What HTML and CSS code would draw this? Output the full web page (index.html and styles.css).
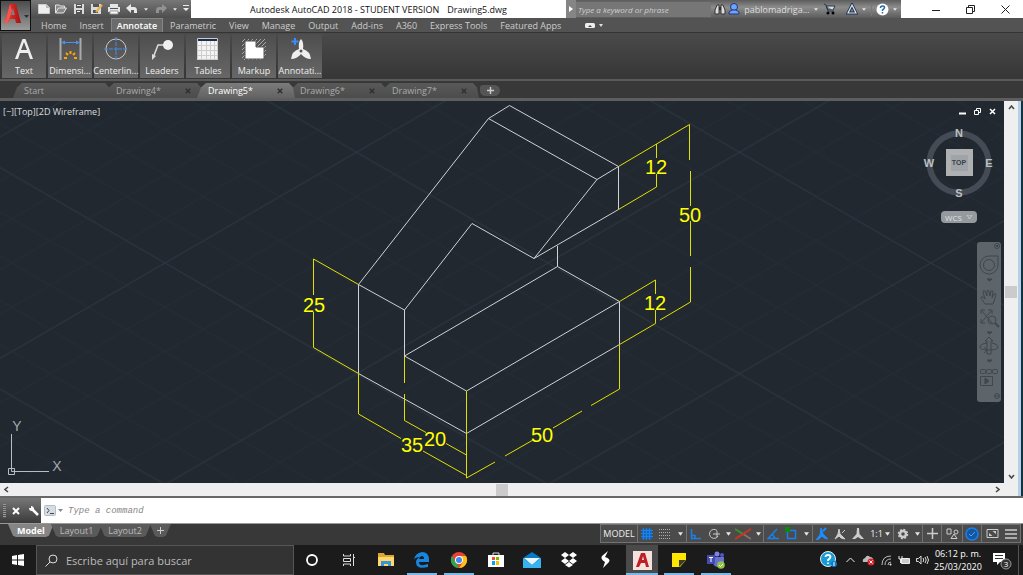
FILE: index.html
```html
<!DOCTYPE html>
<html lang="en">
<head>
<meta charset="utf-8">
<title>Autodesk AutoCAD 2018 - Drawing5.dwg</title>
<link rel="stylesheet" href="styles.css">
</head>
<body>
<svg class="defs" width="0" height="0" aria-hidden="true">
  <defs>
    <symbol id="caret" viewBox="0 0 6 4"><path d="M0 0h6L3 4z"/></symbol>
    <symbol id="close" viewBox="0 0 8 8"><path d="M1 1l6 6M7 1L1 7" fill="none" stroke="currentColor" stroke-width="2"/></symbol>
    <linearGradient id="red" x1="0" x2="1"><stop offset="0" stop-color="#f04038"/><stop offset="1" stop-color="#a90f12"/></linearGradient>
  </defs>
</svg>
<div class="app">
  <header class="top">
    <button class="app-menu" aria-label="Application menu">
      <svg width="28" height="28" viewBox="0 0 28 28"><path d="M2 21L8 2h6l5 19h-5l-1-4H8l-2 4z" fill="url(#red)"/><path d="M8 2L4 17l-2 4 4 0 4-12z" fill="#f4564e"/><path d="M9 13l2-7 2 7z" fill="#7e7e7e"/><path d="M22 13h5l-2.500 3z" fill="#26303c"/></svg>
    </button>
    <div class="top-main">
      <div class="titlebar">
        <div class="quick">
          <button aria-label="New"><svg width="14" height="12"><path d="M1.500 1.500h8l3 3v6h-11z" fill="#eee" stroke="#ccc"/><path d="M9 1v4h4" fill="#bbb"/></svg></button>
          <button aria-label="Open"><svg width="14" height="12"><path d="M1.500 10V2h4l1 1h4v2M1.500 10l3-5h8l-3 5z" fill="#888" stroke="#e4e4e4"/></svg></button>
          <button aria-label="Save"><svg width="14" height="12"><path d="M2 1h10v10H2z" fill="#dadada"/><path d="M4 1h6v4H4zM4 7h6v4H4z" fill="#555"/><path d="M5 2h4v1H5zM5 8h3v1H5z" fill="#eee"/></svg></button>
          <button aria-label="Save as"><svg width="14" height="12"><path d="M1 1h10v10H1z" fill="#dadada"/><path d="M3 1h6v3H3zM3 7h5v3H3z" fill="#555"/><path d="M6 9l6-7" stroke="#eab24a" stroke-width="2"/></svg></button>
          <button aria-label="Plot"><svg width="14" height="12"><path d="M3 1h8v3H3zM1 4h12v5H1z" fill="#e5e5e5"/><path d="M3 5h8v1H3z" fill="#555"/><path d="M3 8h8v3H3z" fill="#fff" stroke="#999"/></svg></button>
          <button aria-label="Undo"><svg width="14" height="12"><path d="M1 5l5-4v3h3q3 0 3 4v2H9V7H6v3z" fill="#e8e8e8"/></svg></button>
          <button class="slim" aria-label="Undo list"><svg class="caret" width="4" height="3"><use href="#caret"/></svg></button>
          <button aria-label="Redo"><svg width="14" height="12"><path d="M13 5L8 1v3H5Q2 4 2 8v2h3V7h3v3z" fill="#929292"/></svg></button>
          <button class="slim" aria-label="Redo list"><svg class="caret" width="4" height="3"><use href="#caret"/></svg></button>
          <button class="slim" aria-label="Customize"><svg width="8" height="8"><path d="M1 0h6v1H1zM1 3h6L4 6z" fill="#eee"/></svg></button>
        </div>
        <h1 class="title"><span>Autodesk AutoCAD 2018 - STUDENT VERSION</span><span>Drawing5.dwg</span></h1>
        <div class="info">
          <button class="expand" aria-label="Collapse search"><svg width="4" height="6"><path d="M0 0l4 3-4 3z" fill="#fff"/></svg></button>
          <input class="search" type="text" placeholder="Type a keyword or phrase" aria-label="Search help">
          <button class="i18" aria-label="Find"><svg width="12" height="11"><path d="M1 10V6l2-5h2v9zM7 10V1h2l2 5v4z" fill="#ddd" stroke="#333"/><path d="M5 3h2v3H5z" fill="#333"/></svg></button>
          <button class="user"><svg width="12" height="12"><circle cx="6" cy="4" r="3.500" fill="#6ea4ff" stroke="#1e3670"/><path d="M1 11V9l3-2h4l3 2v2z" fill="#6ea4ff" stroke="#1e3670"/></svg><span>pablomadriga...</span><svg class="caret" width="4" height="3"><use href="#caret"/></svg></button>
          <button class="i24" aria-label="App store"><svg width="13" height="12"><path d="M1 1l2 1 2 6h6M3 3h9l-2 4H5z" fill="#ddd" stroke="#23364a"/><circle cx="5" cy="10" r="1.500"/><circle cx="10" cy="10" r="1.500"/></svg></button>
          <button class="i30" aria-label="Stay connected"><svg width="12" height="12"><path d="M6 2L2 10h8z" fill="none" stroke="#22344c" stroke-width="3"/><path d="M6 2L2 10h8z" fill="none" stroke="#dae7f5" stroke-width="1.200"/></svg><svg class="caret" width="4" height="3"><use href="#caret"/></svg></button>
          <button class="i30 ruled" aria-label="Help"><svg width="13" height="13"><circle cx="6.500" cy="6.500" r="6" fill="#fff"/><path d="M4.500 5q0-2 2-2t2 1.500Q8.500 5.500 6.500 7v1M6.500 9v1.500" fill="none" stroke="#2766b4" stroke-width="1.500"/></svg><svg class="caret" width="4" height="3"><use href="#caret"/></svg></button>
        </div>
        <div class="window">
          <button aria-label="Minimize"><svg width="9" height="9"><path d="M0 5.500h8" stroke="#222"/></svg></button>
          <button aria-label="Restore"><svg width="9" height="9"><path d="M.5 2.500h6v6h-6zM2.500 2V.5h6v6H7" fill="none" stroke="#222"/></svg></button>
          <button aria-label="Close"><svg width="9" height="9"><path d="M.5.5l8 8M8.500.5l-8 8" stroke="#222"/></svg></button>
        </div>
      </div>
      <nav class="menu">
        <button>Home</button><button>Insert</button><button class="on">Annotate</button><button>Parametric</button><button>View</button><button>Manage</button><button>Output</button><button>Add-ins</button><button>A360</button><button>Express Tools</button><button>Featured Apps</button>
        <button class="mini" aria-label="Minimize ribbon"><svg width="18" height="7"><rect y="1" width="10" height="5" rx="1.500" fill="#eee"/><path d="M3 5l2-2 2 2z" fill="#444"/><path d="M14 2h4l-2 3z" fill="#ddd"/></svg></button>
      </nav>
    </div>
  </header>

  <section class="ribbon" aria-label="Annotate">
    <button><svg width="28" height="26"><path d="M5 23L12.500 3h3L23 23h-3l-2-6H10l-2 6zM11 14h6l-3-8z" fill="#eee"/></svg><span>Text</span></button>
    <button><svg width="28" height="26"><path d="M4.500 2v22M24.500 2v22" stroke="#aaa" stroke-width="2"/><path d="M6 6.500h17" stroke="#4a90f0"/><path d="M5 6.500l4-2v4zM24 6.500l-4-2v4z" fill="#4a90f0"/><path d="M14.500 15v3M10 17l2 2M19 17l-2 2M8 22h3M18 22h3" stroke="#ffa500" stroke-width="2"/></svg><span>Dimensi...</span></button>
    <button><svg width="28" height="26"><circle cx="14" cy="13" r="10" fill="none" stroke="#c8c8c8"/><path d="M14 1v10M14 15v10M2 13h10M16 13h10" stroke="#438be8" stroke-dasharray="4 1"/><path d="M14 11v4M12 13h4" stroke="#438be8"/></svg><span>Centerlin...</span></button>
    <button><svg width="28" height="26"><path d="M5 22L10 9h8" fill="none" stroke="#ddd" stroke-width="1.500"/><path d="M4 24v-6l4 2z" fill="#ddd"/><circle cx="20" cy="9" r="5" fill="#eef0f1"/></svg><span>Leaders</span></button>
    <button><svg width="28" height="26"><path d="M3 2h21v22H3z" fill="#f3f3f3"/><path d="M3 2h21v3H3z" fill="#1b2f52"/><path d="M3 9.500h21M3 14.500h21M3 19.500h21M7.500 5v19M12.500 5v19M16.500 5v19M20.500 5v19" stroke="#ccc"/><path d="M3.500 2.500h20v21h-20z" fill="none" stroke="#ccc"/></svg><span>Tables</span></button>
    <button><svg width="28" height="26"><path d="M2 6l3-3M2 10l7-7M2 14L13 3M2 18L17 3M2 22L21 3M4 24L25 3M8 24L26 6M12 24l14-14M16 24l10-10M20 24l6-6" stroke="#aaa"/><path d="M5 5h11v6h8v12H5z" fill="#fff" stroke="#555"/></svg><span>Markup</span></button>
    <button><svg width="28" height="26"><path d="M15 3q3 3 2 10 7 2 8 10-6 0-10-5-4 5-10 5 1-8 8-10-1-7 2-10z" fill="#eee"/><circle cx="15" cy="15" r="1.500" fill="#555"/><path d="M9 2v7M5.500 5.500h7" stroke="#3d8bf5" stroke-width="2"/></svg><span>Annotati...</span></button>
  </section>

  <nav class="files">
    <button class="file"><span>Start</span></button>
    <button class="file"><span>Drawing4*</span><svg width="6" height="6"><use href="#close"/></svg></button>
    <button class="file on"><span>Drawing5*</span><svg width="6" height="6"><use href="#close"/></svg></button>
    <button class="file"><span>Drawing6*</span><svg width="6" height="6"><use href="#close"/></svg></button>
    <button class="file"><span>Drawing7*</span><svg width="6" height="6"><use href="#close"/></svg></button>
    <button class="add" aria-label="New drawing"><svg width="7" height="7"><path d="M3.500 0v7M0 3.500h7" stroke="#ccc" stroke-width="1.500"/></svg></button>
  </nav>

  <main class="work">
    <div class="viewport">
      <svg class="drawing" viewBox="0 101 1004 382" preserveAspectRatio="xMidYMid slice" role="img" aria-label="Isometric drawing">
        <defs>
          <pattern id="minor" x="165" y="263" width="76.600" height="44.300" patternUnits="userSpaceOnUse"><path d="M0 0L76.600 44.300M0 44.300L76.600 0" stroke="#242c36"/></pattern>
          <pattern id="major" x="165" y="263" width="383" height="221.500" patternUnits="userSpaceOnUse"><path d="M0 0L383 221.500M0 221.500L383 0" stroke="#2c3540"/></pattern>
        </defs>
        <path d="M0 101h1004v382H0z" fill="url(#minor)"/>
        <path d="M0 101h1004v382H0z" fill="url(#major)"/>
        <path class="solid" d="M358.500 284.500L488.500 118.500L509.500 105.500L618.500 166.500L597 179.500L488.500 118.500M618.500 166.500V209.500L534 258.500L597 179.500M534 258.500L472 223.500L404.500 310L358.500 284.500V373.500L466.500 433.500L619.500 344.500V301.500L466.500 391L404.500 356V310M404.500 356L557.500 266.500L619.500 301.500M557.500 266.500V246M466.500 391V433"/>
        <path class="dim" d="M358.500 284.500L313.500 259V295M313.500 312V347.500L358.500 373.500V414L401 438.500M423 451L466.500 475.500M404.500 356V383M404.500 394V420.500L426 432.500M446 443.500L466.500 455M466.500 391V478L495 462M505 456L533 440M553 428L582 411M591 405.500L619.500 389V344.500L655.500 323.500V310M619.500 301.500L655.500 280V294M618.500 166.500L689.500 124.500V160M656.500 144V158M656.500 174V187L618.500 209.500M690.500 171V206M690.500 221V256M690.500 267V302L660 320"/>
        <g class="num"><text x="314" y="312">25</text><text x="656" y="174">12</text><text x="690" y="222">50</text><text x="655" y="310">12</text><text x="542" y="442">50</text><text x="435" y="446">20</text><text x="412" y="452">35</text></g>
        <path d="M11.500 434V471.500H49M8.500 468.500h6v6h-6z" fill="none" stroke="#b9bcc0"/>
        <g class="axis"><text x="17" y="431">Y</text><text x="57" y="471">X</text></g>
      </svg>
      <div class="view-label">[−][Top][2D Wireframe]</div>
      <div class="overlay">
        <div class="doc-controls">
          <button aria-label="Minimize drawing"><svg width="9" height="9"><path d="M1 6.500h7" stroke="#fff" stroke-width="2"/></svg></button>
          <button aria-label="Restore drawing"><svg width="9" height="9"><path d="M1.500 3.500h4v4h-4zM3.500 3V1.500h4v4H6" fill="none" stroke="#fff"/></svg></button>
          <button aria-label="Close drawing"><svg width="9" height="9"><path d="M2 2l5 5M7 2L2 7" stroke="#fff" stroke-width="1.500"/></svg></button>
        </div>
        <svg class="cube" width="74" height="74" viewBox="0 0 74 74" role="img" aria-label="View cube">
          <circle cx="37" cy="37" r="29.500" fill="none" stroke="#444b54" stroke-width="6"/>
          <path d="M24 23h27v27H24z" fill="#aeb0b2"/><path d="M29 29h17v16H29z" fill="#a0a4a8"/>
          <text class="face" x="37" y="39">TOP</text>
          <text x="37" y="11">N</text><text x="37" y="71">S</text><text x="7" y="41">W</text><text x="67" y="41">E</text>
        </svg>
        <button class="wcs">WCS<svg width="7" height="5"><path d="M1 0l2.500 4L6 0z" fill="none" stroke="#c3c7cb"/></svg></button>
        <div class="navbar">
          <svg width="24" height="160" viewBox="0 0 24 160" fill="none" stroke="#3f474f">
            <circle cx="20" cy="4" r="2.500"/><path d="M19 3l2 2M21 3l-2 2"/>
            <path d="M12 14h9v9a9 9 0 1 1-9-9z"/><circle cx="12" cy="23" r="5.500"/>
            <path d="M10 37h5l-2.500 2z" fill="#3f474f"/>
            <path d="M8 62L4 56q0-2 2-1l2 2-2-7q0-2 2-1l2 5V49q1-2 2 0l1 5 1-5q2-1 2 1l-1 6 2-4q2-1 2 1l-3 9z"/>
            <path d="M5 69L15 81M14 69L4 81M4 72v-4h4M15 72v-4h-4M4 77v4h4"/><circle cx="15" cy="78" r="4"/><path d="M18 81l4 4" stroke-width="2"/>
            <path d="M10 90h5l-2.500 2z" fill="#3f474f"/>
            <path d="M10 112V99H8l4-4 4 4h-2v13z"/><path d="M10 101q-7 1-7 4 0 3 9 3t9-3q0-3-6-4M7 105l3 3-3 3"/>
            <path d="M10 118h5l-2.500 2z" fill="#3f474f"/>
            <rect x="3.500" y="127.500" width="5" height="4" rx="1"/><rect x="9.500" y="127.500" width="5" height="4" rx="1"/><rect x="15.500" y="127.500" width="5" height="4" rx="1"/>
            <path d="M3.500 134.500h12v9h-12z"/><path d="M8 136v6l4-3z" fill="#3f474f"/>
            <circle cx="20" cy="154" r="2.500"/><path d="M18 154h4"/>
          </svg>
        </div>
      </div>
    </div>
    <div class="vscroll">
      <svg width="7" height="5"><path d="M1 4l2.500-3L6 4" fill="none" stroke="#444" stroke-width="1.500"/></svg>
      <i class="thumb"></i>
      <svg width="7" height="5"><path d="M1 1l2.500 3L6 1" fill="none" stroke="#444" stroke-width="1.500"/></svg>
    </div>
    <div class="hscroll">
      <svg width="5" height="7"><path d="M4 1L1 3.500L4 6" fill="none" stroke="#444" stroke-width="1.500"/></svg>
      <i class="thumb"></i>
      <svg width="5" height="7"><path d="M1 1l3 2.500L1 6" fill="none" stroke="#444" stroke-width="1.500"/></svg>
    </div>
    <div class="corner"></div>
    <div class="edge"></div>
  </main>

  <div class="command">
    <div class="command-tools">
      <i class="grip"></i>
      <button aria-label="Close command line"><svg width="8" height="8"><path d="M1 1l6 6M7 1L1 7" stroke="#fff" stroke-width="2"/></svg></button>
      <button aria-label="Customize command line"><svg width="11" height="11"><path d="M4 4l6 6" stroke="#fff" stroke-width="2.500"/><path d="M3 1v2H1q0 3 3 3 2-1 2-3Q5 1 3 1z" fill="#fff"/></svg></button>
    </div>
    <button class="prompt" aria-label="Recent commands"><svg width="20" height="12"><rect x=".5" y=".5" width="11" height="10" rx="1" fill="#d5dde4" stroke="#b6bcc1"/><path d="M3 3l2 2.500L3 8M6 8.500h4" fill="none" stroke="#444"/><path d="M14 4h5l-2.500 3z" fill="#888"/></svg></button>
    <input type="text" placeholder="Type a command" aria-label="Command">
  </div>

  <footer class="status">
    <nav class="layouts">
      <button class="layout on">Model</button><button class="layout">Layout1</button><button class="layout">Layout2</button><button class="layout plus" aria-label="New layout"><svg width="7" height="7"><path d="M3.500 0v7M0 3.500h7" stroke="#ccc"/></svg></button>
    </nav>
    <div class="tools">
      <div class="set"><button class="w36">MODEL</button></div>
      <div class="set">
        <button class="w18" aria-label="Grid"><svg width="12" height="12"><path d="M1 1h10v10H1z" fill="#1466b8"/><path d="M2.500 0v12M5.500 0v12M8.500 0v12M0 2.500h12M0 5.500h12M0 8.500h12" stroke="#1a80ea"/></svg></button>
        <button class="w18" aria-label="Snap"><svg width="12" height="12"><path d="M0 1.500h12M0 4.500h12M0 7.500h12M0 10.500h12" stroke="#aaa" stroke-dasharray="1 1"/></svg></button>
        <button class="w12" aria-label="Snap options"><svg class="caret" width="5" height="4"><use href="#caret"/></svg></button>
      </div>
      <div class="set">
        <button class="w18" aria-label="Ortho"><svg width="12" height="12"><path d="M1.500 1v9.500H11M2 7.500h3V10" fill="none" stroke="#1a7fe8" stroke-width="1.500"/></svg></button>
        <button class="w18" aria-label="Polar tracking"><svg width="12" height="12"><path d="M9 2.500A4.500 4.500 0 1 0 10 8M5 6h7M9 3v6" fill="none" stroke="#ccc"/></svg></button>
        <button class="w10" aria-label="Polar options"><svg class="caret" width="5" height="4"><use href="#caret"/></svg></button>
        <button class="w20" aria-label="Isometric drafting"><svg width="16" height="12"><path d="M0 1l16 10" stroke="#e52222" stroke-width="1.500"/><path d="M0 11L16 1" stroke="#1da12a" stroke-width="1.500"/><path d="M8 6l8 5" stroke="#777" stroke-width="1.500"/><path d="M8 6l8-5" stroke="#e52222" stroke-width="1.500"/><path d="M0 1l8 5" stroke="#1da12a" stroke-width="1.500"/><path d="M0 11l8-5" stroke="#e52222" stroke-width="1.500"/></svg></button>
        <button class="w10" aria-label="Isoplane options"><svg class="caret" width="5" height="4"><use href="#caret"/></svg></button>
      </div>
      <div class="set">
        <button class="w18" aria-label="Object snap tracking"><svg width="12" height="12"><path d="M10 1L1 10.500h11M5 6l3 4" fill="none" stroke="#1a7fe8" stroke-width="1.500"/></svg></button>
        <button class="w18" aria-label="Object snap"><svg width="13" height="13"><path d="M2.500 3.500h8v8h-8z" fill="none" stroke="#1a7fe8" stroke-width="1.500"/><path d="M0 0h5v5H0z" fill="#0c890c"/></svg></button>
        <button class="w12" aria-label="Snap list"><svg class="caret" width="5" height="4"><use href="#caret"/></svg></button>
      </div>
      <div class="set">
        <button class="w18" aria-label="Annotation visibility"><svg width="14" height="13"><path d="M6 1l2 6 5 5-4-1-2-2-3 3-3 1 4-5z" fill="#1a8cff" stroke="#1a8cff"/><path d="M8 4l3-3" stroke="#1a8cff" stroke-width="2"/></svg></button>
        <button class="w18" aria-label="Auto scale"><svg width="12" height="12"><path d="M5 1l1 5 5 5-4-1-2-2-4 3 3-5zM8 5l3-3" fill="#ccc" stroke="#ccc"/></svg></button>
        <button class="w18" aria-label="Annotation scale"><svg width="12" height="12"><path d="M5 0h2l.5 6L12 11H9L6 9l-3 2H0l4.500-5z" fill="#ccc"/></svg></button>
        <button class="w26">1:1<svg class="caret" width="5" height="4"><use href="#caret"/></svg></button>
      </div>
      <div class="set">
        <button class="w18" aria-label="Workspace"><svg width="12" height="12"><circle cx="6" cy="6" r="3" fill="none" stroke="#ccc" stroke-width="2.500"/><circle cx="6" cy="6" r="4.500" fill="none" stroke="#ccc" stroke-width="1.500" stroke-dasharray="2 1.500"/></svg></button>
        <button class="w10" aria-label="Workspace list"><svg class="caret" width="5" height="4"><use href="#caret"/></svg></button>
      </div>
      <div class="set"><button class="w18" aria-label="Annotation monitor"><svg width="11" height="11"><path d="M5.500 0v11M0 5.500h11" stroke="#ccc" stroke-width="1.500"/></svg></button></div>
      <div class="set"><button class="w20" aria-label="Isolate objects"><svg width="13" height="12"><path d="M1 1h4v5H1zM5 10.500L8 6l3 4.500z" fill="none" stroke="#ccc"/><circle cx="10" cy="4" r="2" fill="none" stroke="#ccc"/></svg></button></div>
      <div class="set"><button class="w18" aria-label="Hardware acceleration"><svg width="14" height="14"><circle cx="7" cy="7" r="6" fill="#1456a0" stroke="#1a80e8" stroke-width="1.500"/><path d="M4 7l2 2 4-4" fill="none" stroke="#49a5ff"/></svg></button></div>
      <div class="set">
        <button class="w20" aria-label="Clean screen"><svg width="13" height="11"><path d="M1 1.500h11v8H1z" fill="none" stroke="#ccc"/><path d="M6.500 3H10v3zM3 5v3h3.500z" fill="#ccc"/></svg></button>
        <button class="w18" aria-label="Customization"><svg width="12" height="10"><path d="M0 1h12M0 5h12M0 9h12" stroke="#ccc" stroke-width="1.500"/></svg></button>
      </div>
    </div>
  </footer>

  <div class="taskbar">
    <button class="start" aria-label="Start menu"><svg width="12" height="12"><path d="M0 2l5-1v4.500H0zM6 1l6-1v5.500H6zM0 6.500h5V11l-5-1zM6 6.500h6V12l-6-1z" fill="#fff"/></svg></button>
    <label class="find"><svg width="13" height="13"><circle cx="8" cy="5" r="4" fill="none" stroke="#ddd"/><path d="M5 8l-4.500 4.500" stroke="#ddd"/></svg><input type="text" placeholder="Escribe aquí para buscar" aria-label="Buscar"></label>
    <div class="pins">
      <button aria-label="Cortana"><svg width="14" height="14"><circle cx="7" cy="7" r="5" fill="none" stroke="#fff" stroke-width="1.800"/></svg></button>
      <button aria-label="Task view"><svg width="14" height="14"><path d="M1.500 1v2h7V1M1.500 13v-2h7v2M1.500 5.500h7v3h-7zM11.500 1v12M11 4.500h2" fill="none" stroke="#ddd"/></svg></button>
      <button aria-label="Explorer"><svg width="18" height="16"><path d="M1 1h6l1 2h9v11H1z" fill="#dca62f"/><path d="M1 5h16v9H1z" fill="#ffd86b"/><path d="M4 14V9h10v5h-3v-2H7v2z" fill="#3994e0"/></svg></button>
      <button class="run" aria-label="Edge"><svg width="18" height="16"><path d="M1 8Q2 1 9 0q7 0 7 8v2H6q0 4 5 3l4-1v3Q3 18 3 10q0-3 4-5-5 0-6 3zM6 7h5q0-3-2-3T6 7z" fill="#1686de" fill-rule="evenodd"/></svg></button>
      <button class="run" aria-label="Chrome"><svg width="18" height="18" viewBox="0 0 18 18"><circle cx="9" cy="9" r="8" fill="#e54335"/><path d="M2 5l5 8 2 4A8 8 0 0 1 2 5z" fill="#31a452"/><path d="M9 5h7A8 8 0 0 1 9 17l4-6z" fill="#fbc116"/><circle cx="9" cy="9" r="4" fill="#fff"/><circle cx="9" cy="9" r="3" fill="#4285f4"/></svg></button>
      <button aria-label="Store"><svg width="18" height="18"><path d="M6 5V2h6v3" fill="none" stroke="#ddd"/><path d="M1 4h16v12H1z" fill="#fff"/><path d="M5 6h3v3H5z" fill="#f25022"/><path d="M9 6h3v3H9z" fill="#7fba00"/><path d="M5 10h3v4H5z" fill="#00a4ef"/><path d="M9 10h3v4H9z" fill="#ffb900"/></svg></button>
      <button aria-label="Mail"><svg width="18" height="16"><path d="M0 6l9-6 9 6v10H0z" fill="#0878c9"/><path d="M1 6h16l-8 7z" fill="#e8f6ff"/><path d="M0 6l9 7 9-7v10H0z" fill="#35b4f1"/></svg></button>
      <button aria-label="Dropbox"><svg width="18" height="16"><path d="M5 0l4 3-4 3-4-3zM13 0l4 3-4 3-4-3zM5 6l4 3-4 3-4-3zM13 6l4 3-4 3-4-3zM9 10l4 3-4 2.500L5 13z" fill="#fff"/></svg></button>
      <button aria-label="S app"><svg width="12" height="18"><path d="M8 0L2 5q-2 3 3 6l-2 6 6-6q2-3-4-5z" fill="#fff"/></svg></button>
      <button class="run current" aria-label="AutoCAD"><svg width="19" height="19"><path d="M0 0h19v19H0z" fill="#f3e3dc"/><path d="M3 16L8 2h4l4 14h-3l-1-4H8l-2 4zM9 9h2l-1-4z" fill="#bd1e25" fill-rule="evenodd"/></svg></button>
      <button class="run" aria-label="Sticky notes"><svg width="14" height="14"><path d="M0 0h14v7L8 14H0z" fill="#ffe600"/><path d="M7 7h7l-7 7z" fill="#3c3c2e"/></svg></button>
      <button class="run" aria-label="Teams"><svg width="20" height="18"><circle cx="11" cy="3" r="2.500" fill="#7b83eb"/><circle cx="16" cy="4" r="2" fill="#5059c9"/><path d="M7 6h11v6q-2 5-7 4-4-1-4-5z" fill="#6770d1"/><path d="M1 4h8v9H1z" fill="#434cb1"/><path d="M3 6.500h4M5 6v5" stroke="#fff"/><circle cx="15" cy="14" r="3.800" fill="#8fc543"/><path d="M13 14l1.500 1.500L17 13" fill="none" stroke="#fff"/></svg></button>
    </div>
    <div class="tray">
      <button class="t24" aria-label="Support"><svg width="18" height="18"><circle cx="8" cy="8" r="7.500" fill="#169bd7" stroke="#eee"/><path d="M5.500 6q0-2 2.500-2t2.500 2Q10.500 7 8 9v1M8 11.500v1.500" fill="none" stroke="#fff" stroke-width="1.800"/><circle cx="14" cy="13" r="3" fill="#0c78c4"/><path d="M14 11v4" stroke="#fff"/></svg></button>
      <button class="t18" aria-label="Hidden icons"><svg width="9" height="6"><path d="M.5 5L4.500 1l4 4" fill="none" stroke="#eee"/></svg></button>
      <button class="t18" aria-label="OneDrive"><svg width="13" height="12"><path d="M1 8q-1-3 2-4 2-4 5-1 4 0 3 5z" fill="#bbb"/><circle cx="9" cy="8" r="3.500" fill="#df2027"/><path d="M7.500 6.500l3 3M10.500 6.500l-3 3" stroke="#fff"/></svg></button>
      <button class="t18" aria-label="Network"><svg width="11" height="11"><path d="M1 10Q1 1 10 1M4 10q0-6 6-6M7 10q0-3 3-3" fill="none" stroke="#bbb"/><circle cx="9.500" cy="9.500" r="1" fill="#eee"/></svg></button>
      <button class="t18" aria-label="Battery"><svg width="13" height="10"><path d="M3.500 3.500h8v5h-8z" fill="#ccc" stroke="#eee"/><path d="M1 1v3h3V1M2.500 4v4" fill="none" stroke="#eee"/></svg></button>
      <button class="t18" aria-label="Volume"><svg width="13" height="10"><path d="M.5 3.500h2L5 1v8L2.500 6.500h-2zM7 3q1.500 2 0 4M9 2q2.500 3 0 6M11 1q3 4 0 8" fill="none" stroke="#ddd"/></svg></button>
      <div class="clock"><time>06:12 p. m.</time><time>25/03/2020</time></div>
      <button class="notify" aria-label="Notifications"><svg width="20" height="20"><path d="M1 3h12v9H8l-3 3v-3H1z" fill="#fff"/><path d="M3 5.500h8M3 8.500h8" stroke="#333"/><circle cx="14" cy="14" r="5" fill="#333" stroke="#999"/><text x="14" y="17">3</text></svg></button>
    </div>
  </div>
</div>
</body>
</html>
```
FILE: styles.css
```css
* { box-sizing: border-box; }
body { margin: 0; font-family: "Open Sans", "Noto Sans", sans-serif; font-size: 9px; color: #ddd; }
button, input { font: inherit; color: inherit; border: 0; margin: 0; padding: 0; background: none; }
button { display: flex; align-items: center; justify-content: center; white-space: nowrap; }
svg { display: block; flex: none; }
.defs { position: absolute; }
.caret { fill: #e6e6e6; }
.app { display: flex; flex-direction: column; height: 100vh; background: #383838; overflow: hidden; }

/* Title bar and ribbon tabs */
.top { display: flex; background: #535353; border-bottom: 1px solid #343434; }
.app-menu { width: 31px; height: 31px; border: 1px solid #111; background: linear-gradient(#4c4c4c, #9b9b9b); }
.top-main { flex: 1; min-width: 0; }
.titlebar { display: flex; height: 18px; background: #fff; }
.quick { display: flex; align-items: center; width: 160px; padding-left: 4px; background: linear-gradient(#777, #4d4d4d); }
.quick button { width: 18px; }
.quick .slim { width: 11px; }
.title { display: flex; flex: 1; gap: 8px; justify-content: center; align-items: center; margin: 0; font-size: 9px; font-weight: 400; color: #111; white-space: nowrap; }
.info { display: flex; align-items: center; background: linear-gradient(#5c5c5c, #8c8c8c 40%, #5c5c5c); }
.expand { width: 10px; height: 18px; background: #858585; }
.search { width: 135px; height: 15px; padding: 0 2px; background: #767676; font-size: 8px; font-style: italic; }
.search::placeholder { color: #cfcfcf; opacity: 1; }
.i18 { width: 18px; }
.i24 { width: 24px; }
.i30 { width: 30px; gap: 4px; }
.ruled { border-left: 1px solid #777; }
.user { gap: 4px; width: 88px; font-size: 9px; }
.window { display: flex; width: 122px; justify-content: space-around; padding-left: 18px; }
.window button { width: 32px; }
.menu { display: flex; gap: 1px; height: 14px; padding-left: 4px; }
.menu button { padding: 0 5px; border: 1px solid transparent; border-bottom: 0; color: #ccc; }
.menu .on { background: #6b6b6b; border-color: #868686; color: #fff; font-weight: 600; }
.menu .mini { margin-left: 16px; padding: 0; }
.ribbon { display: flex; gap: 2px; height: 46px; padding: 1px 2px; background: linear-gradient(#4a4a4a, #363636); }
.ribbon button { flex: none; flex-direction: column; justify-content: space-between; width: 44px; padding: 2px 0 1px; background: linear-gradient(#4e4e4e, #676767); color: #eee; }

/* Drawing tabs */
.files { display: flex; height: 22px; padding: 2px 0 0 13px; border-top: 2px solid #5a5a5a; border-bottom: 3px solid #5e5e5e; }
.file { justify-content: space-between; width: 98px; margin-right: -6px; padding: 0 12px 0 11px; background: linear-gradient(#595959, #4c4c4c); color: #aaa; clip-path: polygon(0 100%, 4px 30%, 9px 0, 92px 0, 96px 30%, 100% 100%); }
.file.on { z-index: 1; background: linear-gradient(#7b7b7b, #636363); color: #fff; }
.file svg { color: #303030; }
.add { width: 20px; margin: 2px 0 2px 7px; border-radius: 4px 8px 8px 8px; background: #555; }

/* Drawing area */
.work { flex: 1; min-height: 0; display: grid; grid-template: minmax(0, 1fr) 13px / minmax(0, 1fr) 14px 5px; }
.viewport { position: relative; overflow: hidden; background: #212830; }
.drawing { width: 100%; height: 100%; }
.solid, .dim { fill: none; stroke: #d0d2d4; }
.dim { stroke: #e0e000; }
.num, .axis { font: 20px "Liberation Sans", Arial, sans-serif; fill: #ff0; text-anchor: middle; }
.axis { font-size: 14px; fill: #a4a8ac; }
.view-label { position: absolute; top: 4px; left: 3px; line-height: 13px; }
.overlay { position: absolute; top: 6px; right: 3px; display: flex; flex-direction: column; align-items: flex-end; }
.doc-controls { display: flex; gap: 6px; padding-right: 4px; }
.cube { margin: 10px 5px 0 0; fill: #bdc0c2; font: bold 11px "Liberation Sans", Arial, sans-serif; text-anchor: middle; }
.cube .face { font-size: 7px; fill: #394048; }
.wcs { width: 36px; height: 12px; margin: 11px 24px 0 0; gap: 4px; border-radius: 4px; background: #949a9e; color: #dfe1e3; font-size: 8px; }
.navbar { margin-top: 19px; border-radius: 3px; background: #5d646a; }
.vscroll, .hscroll { display: flex; align-items: center; justify-content: space-between; background: #efefef; padding: 4px; }
.vscroll { flex-direction: column; }
.thumb { width: 12px; height: 12px; background: #cbcbcb; }
.corner { background: #efefef; }
.edge { grid-column: 3; grid-row: 1 / 3; background: #b5d0e8; border-right: 2px solid #12323c; }

/* Command line */
.command { display: flex; height: 28px; border-top: 2px solid #686868; border-bottom: 1px solid #999; background: #fff; }
.command-tools { display: flex; align-items: center; gap: 6px; width: 41px; padding-left: 3px; background: linear-gradient(#777, #3a3a3a); }
.grip { width: 3px; height: 14px; background: repeating-linear-gradient(#999 0 1px, #555 1px 2px); }
.command-tools button { width: 8px; }
.command-tools button + button { width: 14px; }
.prompt { padding: 0 4px 0 3px; }
.command input { flex: 1; font-family: "Liberation Mono", monospace; font-style: italic; font-size: 9px; }
.command input::placeholder { color: #888; opacity: 1; }

/* Layout tabs and status bar */
.status { display: flex; justify-content: space-between; height: 21px; }
.layouts { display: flex; height: 13px; padding-left: 8px; }
.layout { padding: 0 9px; margin-right: -3px; background: #5a5a5a; color: #bbb; clip-path: polygon(0 0, 100% 0, calc(100% - 5px) 90%, calc(100% - 8px) 100%, 8px 100%, 5px 90%); }
.layout.on { background: #858585; color: #fff; font-weight: 700; }
.plus { margin-left: 2px; padding: 0 7px; }
.tools { display: flex; padding: 0 2px 2px 0; }
.set { display: flex; border: 1px solid #727272; margin-left: -1px; background: #4b4b4b; color: #eee; }
.set button { gap: 2px; height: 100%; }
.w10 { width: 10px; }
.w12 { width: 12px; }
.w18 { width: 18px; }
.w20 { width: 20px; }
.w26 { width: 26px; }
.w36 { width: 36px; }

/* Windows taskbar */
.taskbar { display: flex; height: 30px; background: #1b1b1b; }
.start { width: 36px; }
.find { display: flex; align-items: center; gap: 8px; width: 258px; padding-left: 8px; background: #333; border: 1px solid #565656; }
.find input { flex: 1; min-width: 0; font-size: 11px; }
.find input::placeholder { color: #bbb; opacity: 1; }
.pins { display: flex; width: 440px; }
.pins button { flex: 1; }
.pins .run { background: linear-gradient(#76b9ed, #76b9ed) center bottom / 30px 2px no-repeat; }
.pins .current { background: linear-gradient(#76b9ed, #76b9ed) center bottom / 32px 2px no-repeat, linear-gradient(#4a4a4a, #4a4a4a) center / 32px 100% no-repeat; }
.tray { display: flex; flex: 1; justify-content: flex-end; margin-right: 4px; border-right: 1px solid #555; }
.t24 { width: 24px; }
.t18 { width: 18px; }
.clock { display: flex; flex-direction: column; justify-content: center; align-items: center; width: 54px; font-size: 9px; line-height: 13px; color: #fff; }
.notify { width: 33px; }
.notify text { font-size: 8px; fill: #fff; text-anchor: middle; }
```
